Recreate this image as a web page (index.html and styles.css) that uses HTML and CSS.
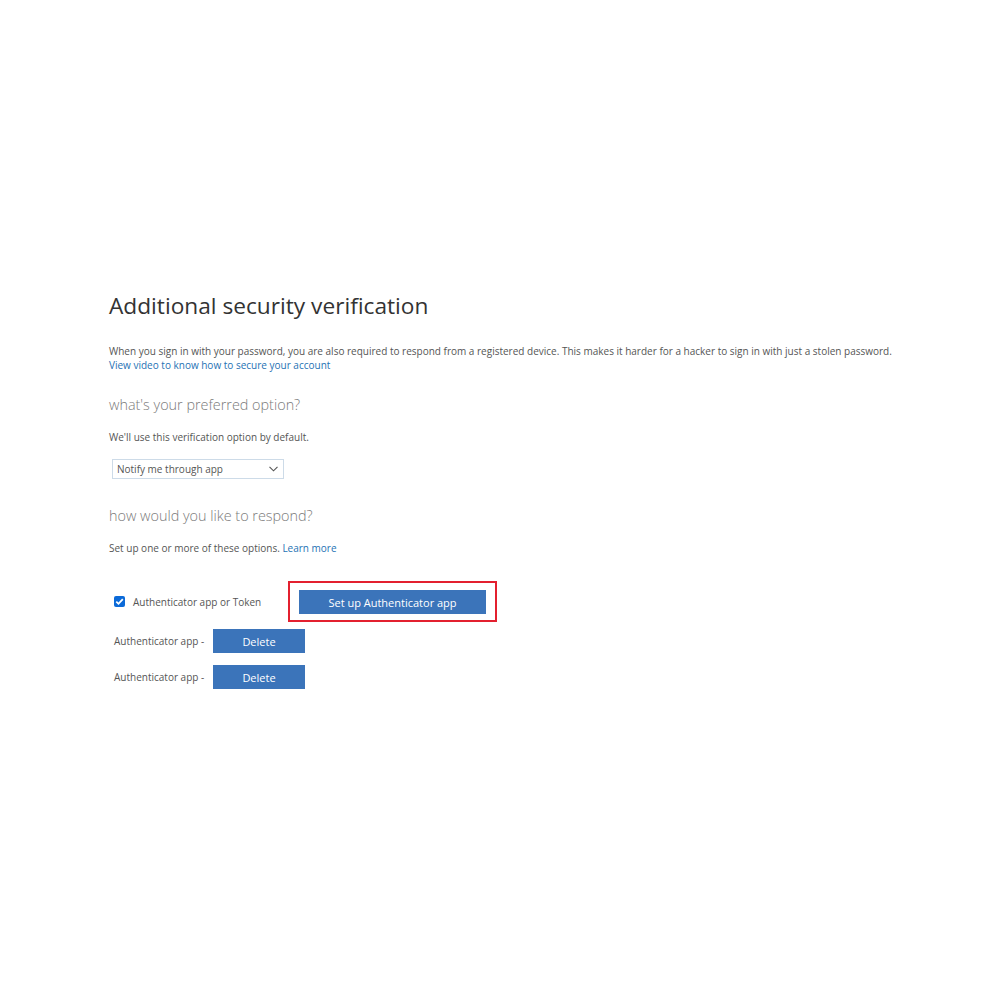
FILE: index.html
```html
<!DOCTYPE html>
<html lang="en">
<head>
    <meta charset="UTF-8">
    <meta name="viewport" content="width=device-width, initial-scale=1.0">
    <title>Additional security verification</title>
    <link rel="stylesheet" href="styles.css">
</head>
<body>
    <main class="page">
        <h1>Additional security verification</h1>
        <p class="intro">
            When you sign in with your password, you are also required to respond from a registered device. This makes it harder for a hacker to sign in with just a stolen password.<br>
            <a href="#">View video to know how to secure your account</a>
        </p>

        <h2>what's your preferred option?</h2>
        <p class="note">We'll use this verification option by default.</p>
        <div class="select-box">
            <span>Notify me through app</span>
            <svg class="chevron" width="9" height="6" viewBox="0 0 9 6"><path d="M0.5 0.8 L4.5 4.8 L8.5 0.8" fill="none" stroke="#555" stroke-width="1.1"/></svg>
        </div>

        <h2 class="section-gap">how would you like to respond?</h2>
        <p class="note">Set up one or more of these options. <a href="#">Learn more</a></p>

        <div class="options">
            <div class="option-row">
                <label class="check-label">
                    <span class="checkbox">
                        <svg width="11" height="11" viewBox="0 0 11 11"><path d="M2.3 5.6 L4.5 7.8 L8.8 3.1" fill="none" stroke="#fff" stroke-width="1.8"/></svg>
                    </span>
                    Authenticator app or Token
                </label>
                <div class="highlight">
                    <button class="btn btn-wide">Set up Authenticator app</button>
                </div>
            </div>
            <div class="device-row">
                <span class="device-name">Authenticator app -</span>
                <button class="btn btn-small">Delete</button>
            </div>
            <div class="device-row">
                <span class="device-name">Authenticator app -</span>
                <button class="btn btn-small">Delete</button>
            </div>
        </div>
    </main>
</body>
</html>
```

FILE: styles.css
```css
:root {
    --text-color: #555;
    --heading-color: #333;
    --soft-color: #7a7a7a;
    --link-color: #2672b4;
    --button-color: #3b74ba;
}
body {
    margin: 0;
    background: #fff;
    font-family: 'Open Sans', 'Noto Sans', sans-serif;
    color: var(--text-color);
}
.page {
    padding: 290px 0 0 109px;
}
h1 {
    margin: 0;
    font-size: 22.7px;
    font-weight: 400;
    line-height: 32px;
    color: var(--heading-color);
}
.intro {
    margin: 22px 0 0;
    font-size: 10px;
    line-height: 14px;
}
a {
    color: var(--link-color);
    text-decoration: none;
}
h2 {
    margin: 22px 0 0;
    font-size: 14.4px;
    font-weight: 300;
    line-height: 22px;
    color: var(--soft-color);
}
h2.section-gap {
    margin-top: 26px;
}
.note {
    margin: 14px 0 0;
    font-size: 10px;
    line-height: 14px;
}
.select-box {
    margin: 15px 0 0 3px;
    width: 163px;
    height: 18px;
    border: 1px solid #cddbe8;
    display: flex;
    align-items: center;
    justify-content: space-between;
    padding: 0 3px 0 4px;
    font-size: 10px;
}
.chevron {
    margin-right: 2px;
}
.options {
    margin-top: 26px;
    padding-left: 5px;
    font-size: 10px;
}
.option-row {
    display: flex;
    align-items: center;
}
.check-label {
    display: flex;
    align-items: center;
    gap: 8px;
    width: 174px;
}
.checkbox {
    width: 11px;
    height: 11px;
    background: #0b6ad8;
    border-radius: 2px;
    display: flex;
}
.highlight {
    border: 2px solid #e3202f;
    padding: 7px 9px 6px 9px;
}
.btn {
    background: var(--button-color);
    color: #fff;
    border: none;
    font-family: inherit;
    font-size: 11px;
    padding: 0;
    cursor: pointer;
}
.btn-wide {
    width: 187px;
    height: 24px;
    display: block;
}
.btn-small {
    width: 92px;
    height: 24px;
}
.device-name {
    width: 99px;
}
.device-row {
    display: flex;
    align-items: center;
    margin-top: 12px;
}
.option-row + .device-row {
    margin-top: 7px;
}
```
